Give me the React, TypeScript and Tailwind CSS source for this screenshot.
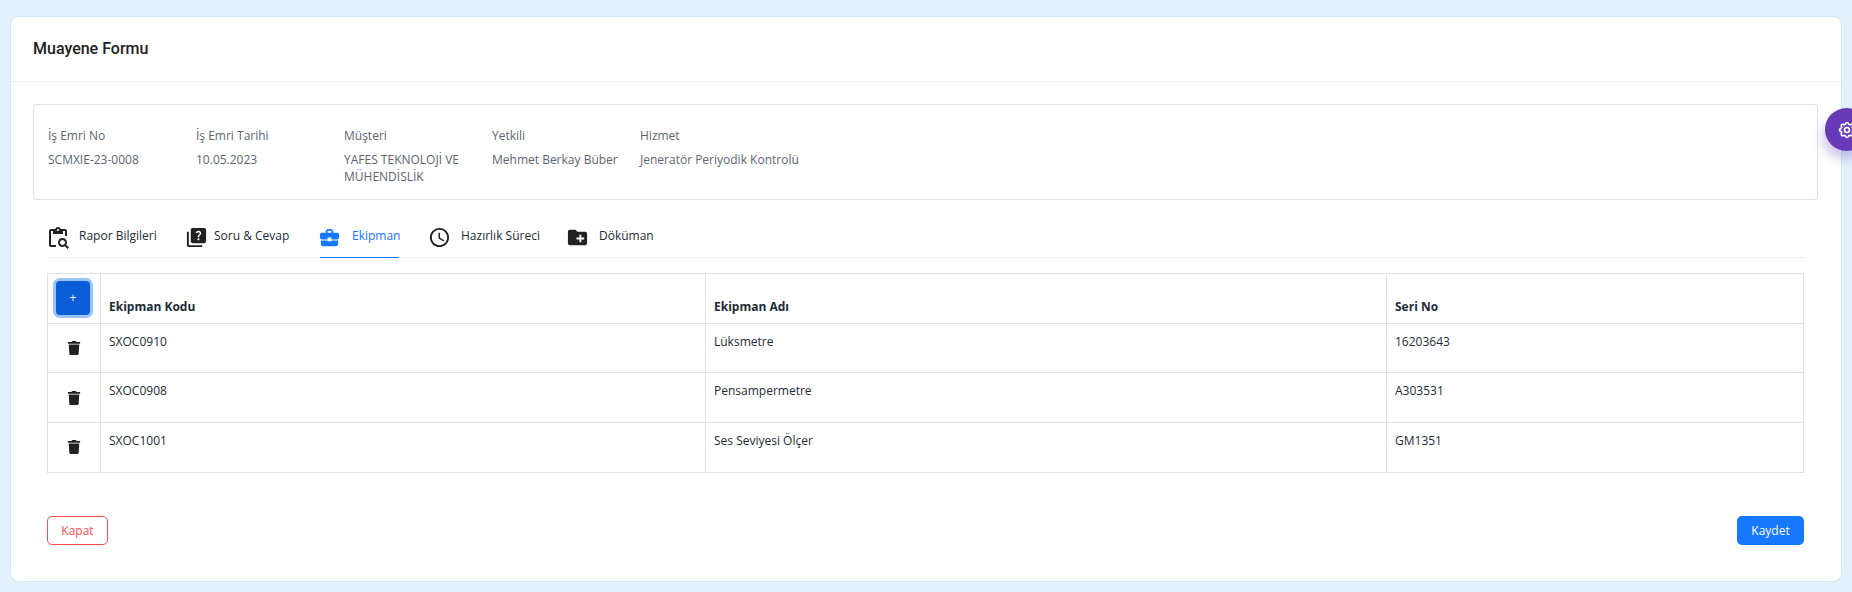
import { FaTrash } from 'react-icons/fa';
import {
  MdBusinessCenter,
  MdCreateNewFolder,
  MdOutlineAccessTime,
  MdOutlineContentPasteSearch,
  MdQuiz,
} from 'react-icons/md';
import { TbSettings } from 'react-icons/tb';

const infoFields = [
  { label: 'İş Emri No', value: 'SCMXIE-23-0008' },
  { label: 'İş Emri Tarihi', value: '10.05.2023' },
  { label: 'Müşteri', value: 'YAFES TEKNOLOJİ VE MÜHENDİSLİK' },
  { label: 'Yetkili', value: 'Mehmet Berkay Büber' },
  { label: 'Hizmet', value: 'Jeneratör Periyodik Kontrolü' },
];

const tabs = [
  { label: 'Rapor Bilgileri', icon: MdOutlineContentPasteSearch, box: 'w-[108px] gap-[9px]', iconBox: '-ml-[3px] size-[24px] text-[#212121]' },
  { label: 'Soru & Cevap', icon: MdQuiz, box: 'w-[103px] gap-[6px]', iconBox: '-ml-[2px] size-[23px] text-[#212121]' },
  { label: 'Ekipman', icon: MdBusinessCenter, box: 'w-[79px] gap-[11px] border-b border-[#1677ff] text-[#1677ff]', iconBox: '-ml-[2px] size-[23px] text-[#1677ff]' },
  { label: 'Hazırlık Süreci', icon: MdOutlineAccessTime, box: 'w-[109px] gap-[10px] pl-[1px]', iconBox: '-ml-[2px] size-[23px] text-[#212121]' },
  { label: 'Döküman', icon: MdCreateNewFolder, box: 'gap-[10px]', iconBox: '-ml-[2px] size-[23px] text-[#212121]' },
];

const rows = [
  { code: 'SXOC0910', name: 'Lüksmetre', serial: '16203643' },
  { code: 'SXOC0908', name: 'Pensampermetre', serial: 'A303531' },
  { code: 'SXOC1001', name: 'Ses Seviyesi Ölçer', serial: 'GM1351' },
];

export default function App() {
  return (
    <div className="relative h-[592px] overflow-hidden bg-[#e3f2fd] pt-[17px] pr-[11px] pl-[11px] font-['Open_Sans','Noto_Sans',sans-serif] text-[12px] text-[#5b6570]">
      <div className="h-[564px] rounded-[8px] bg-white shadow-[0_0_0_1px_#d3e7f7]">
        <div className="flex h-[65px] items-center border-b border-[#eeeeee] px-[22px]">
          <h1 className="font-['Roboto',sans-serif] text-[16px] font-medium text-[#212121]">Muayene Formu</h1>
        </div>

        <div className="pt-[22px] pr-[23px] pl-[22px]">
          <div className="flex h-[96px] rounded-[4px] border border-[#e0e0e0] px-[14px] pt-[22px]">
            {infoFields.map((field) => (
              <div key={field.label} className="w-[148px] pr-[12px] last:flex-1">
                <p className="leading-[18px]">{field.label}</p>
                <p className="mt-[6px] leading-[17px]">{field.value}</p>
              </div>
            ))}
          </div>

          <div className="mx-[14px] mt-[18px] flex h-[40px] gap-[30px] border-b border-[#eeeeee] pl-[2px]">
            {tabs.map((tab) => (
              <div key={tab.label} className={`flex h-[40px] items-start pt-[8px] text-[#212b36] ${tab.box}`}>
                <tab.icon className={`shrink-0 ${tab.iconBox}`} />
                <span className="mt-[1px] whitespace-nowrap leading-[18px]">{tab.label}</span>
              </div>
            ))}
          </div>

          <div className="mx-[14px] mt-[15px]">
            <table className="w-full table-fixed border-collapse border border-[#dfe1e6] text-[#212b36]">
              <colgroup>
                <col className="w-[53px]" />
                <col className="w-[605px]" />
                <col className="w-[681px]" />
                <col />
              </colgroup>
              <thead>
                <tr className="h-[49.5px]">
                  <th className="border border-[#dfe1e6] p-0 pt-[7px] pr-[2px] pb-[7px] align-top">
                    <button className="mx-auto flex size-[34px] items-center justify-center rounded-[4px] bg-[#0b5ed7] text-[12px] font-normal text-white shadow-[0_0_0_3px_#98c5fb]">
                      +
                    </button>
                  </th>
                  <th className="border border-[#dfe1e6] px-[8px] pb-[8px] text-left align-bottom leading-[16px] font-bold">Ekipman Kodu</th>
                  <th className="border border-[#dfe1e6] px-[8px] pb-[8px] text-left align-bottom leading-[16px] font-bold">Ekipman Adı</th>
                  <th className="border border-[#dfe1e6] px-[8px] pb-[8px] text-left align-bottom leading-[16px] font-bold">Seri No</th>
                </tr>
              </thead>
              <tbody>
                {rows.map((row) => (
                  <tr key={row.code} className="h-[49.8px]">
                    <td className="border border-[#dfe1e6]">
                      <FaTrash className="mx-auto size-[14px] text-[#212121]" />
                    </td>
                    <td className="border border-[#dfe1e6] px-[8px] pt-[10px] align-top leading-[16px]">{row.code}</td>
                    <td className="border border-[#dfe1e6] px-[8px] pt-[10px] align-top leading-[16px]">{row.name}</td>
                    <td className="border border-[#dfe1e6] px-[8px] pt-[10px] align-top leading-[16px]">{row.serial}</td>
                  </tr>
                ))}
              </tbody>
            </table>

            <div className="mt-[43px] flex items-center justify-between">
              <button className="h-[29px] w-[61px] rounded-[5px] border border-[#ff4d4f] pt-[1px] text-[#ff4d4f]">Kapat</button>
              <button className="h-[29px] w-[67px] rounded-[5px] bg-[#1677ff] pt-[2px] text-white">Kaydet</button>
            </div>
          </div>
        </div>
      </div>

      <div className="absolute top-[108px] left-[1825px] flex size-[43px] items-center rounded-full bg-[#673ab7] pl-[12px] shadow-[-2px_8px_12px_rgba(103,58,183,0.3)]">
        <TbSettings className="size-[20px] shrink-0 text-white" />
      </div>
    </div>
  );
}
